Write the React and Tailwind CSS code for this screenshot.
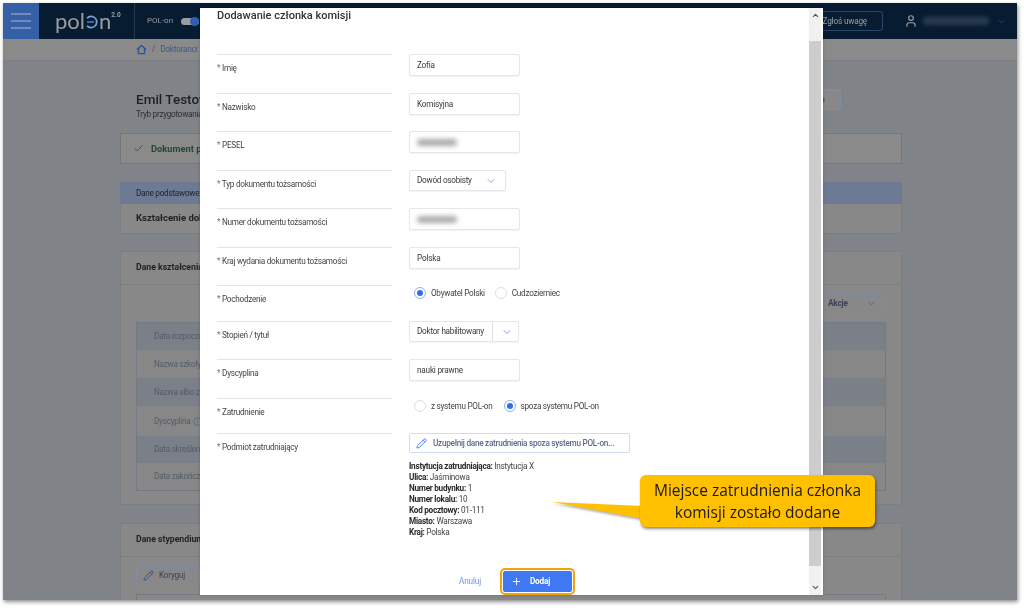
import React from "react";
import { Check, ChevronDown, ChevronUp, Pencil, Plus, User, Info } from "lucide-react";

const Label = ({ children }) => (
  <div className="w-[175px] shrink-0 border-t border-[#e4e4e4] pt-[7px] text-[8.2px] leading-[12px] tracking-[-0.27px] text-[#444]">
    <span className="text-[#777]">* </span>
    {children}
  </div>
);

const Input = ({ value, blur }) => (
  <div className="flex h-[22px] w-[111px] items-center rounded-[2px] border border-[#e6e6e6] bg-white pl-[7px] text-[8.2px] tracking-[-0.2px] text-[#3a3a3a] shadow-[0_1px_1px_rgba(0,0,0,0.05)]">
    {blur ? <span className="h-[7px] w-[40px] rounded bg-[#aaa] blur-[2.5px]"></span> : value}
  </div>
);

const Row = ({ label, h, children }) => (
  <div className={`flex gap-[17px] ${h}`}>
    <Label>{label}</Label>
    <div className="flex-1">{children}</div>
  </div>
);

const Radio = ({ on, label }) => (
  <div className="flex items-center gap-[5px]">
    <span className={`flex h-[12px] w-[12px] items-center justify-center rounded-full border bg-white ${on ? "border-[#8fb0f5]" : "border-[#ddd]"}`}>
      {on && <span className="h-[6px] w-[6px] rounded-full bg-[#2f6fed]"></span>}
    </span>
    <span className="text-[8.2px] tracking-[-0.27px] text-[#444]">{label}</span>
  </div>
);

const Detail = ({ k, v }) => (
  <div className="h-[11px] text-[8.2px] leading-[11px] tracking-[-0.27px] text-[#444]">
    <span className="font-bold text-[#2a2a2a]">{k}:</span> {v}
  </div>
);

const TableRow = ({ label, dark, h, info }) => (
  <div className={`flex items-center pl-[17px] text-[8.2px] tracking-[-0.27px] text-[#555b6b] ${h} ${dark ? "bg-[#7b7f88]" : "bg-[#878787]"}`}>
    {label}
    {info && <Info className="ml-[2px] h-[9px] w-[9px] text-[#46639f]" />}
  </div>
);

const Card = ({ title, h, children }) => (
  <div className={`border border-[#7b7e84] bg-[#888888] ${h}`}>
    <div className="flex h-[33px] items-center border-b border-[#7b7e84] pl-[15px] text-[8.7px] font-bold text-[#1e2024]">{title}</div>
    {children}
  </div>
);

const Background = () => (
  <div className="flex h-full flex-col bg-[#808388] font-['Roboto',sans-serif]">
    <header className="flex h-[36px] shrink-0 items-center bg-[#071c30]">
      <div className="flex h-full w-[36px] flex-col items-center justify-center gap-[5px] bg-[#3660a6]">
        <span className="h-[2px] w-[20px] bg-[#6f8cba]"></span>
        <span className="h-[2px] w-[20px] bg-[#6f8cba]"></span>
        <span className="h-[2px] w-[20px] bg-[#6f8cba]"></span>
      </div>
      <div className="flex h-full w-[96px] items-center border-r border-[#2a3a4d] pl-[16px]">
        <span className="font-['Lato',sans-serif] text-[22px] leading-none text-[#9a9ea3]">pol</span>
        <svg width="14" height="14" viewBox="0 0 14 14" className="mt-[2px]" fill="none">
          <path d="M2 3.2A5.6 5.6 0 1 1 2 10.8" stroke="#7f9fd2" strokeWidth="1.7" />
          <path d="M2 7H9" stroke="#3f78d0" strokeWidth="1.7" />
        </svg>
        <span className="font-['Lato',sans-serif] text-[22px] leading-none text-[#9a9ea3]">n</span>
        <span className="mb-[11px] text-[6.5px] font-bold text-[#9a9ea3]">2.0</span>
      </div>
      <span className="ml-[12px] text-[8px] text-[#9a9ea3]">POL-on</span>
      <div className="relative ml-[8px] h-[7px] w-[18px] rounded-full bg-[#9a9ea3]">
        <span className="absolute right-0 top-[-1px] h-[9px] w-[9px] rounded-full bg-[#2f5fb5]"></span>
      </div>
      <div className="ml-auto flex h-[20px] w-[80px] items-center justify-end rounded-[3px] border border-[#2b4766] pr-[15px] text-[8.2px] tracking-[-0.2px] text-[#9a9ea3]">Zgłoś uwagę</div>
      <User className="ml-[21px] h-[14px] w-[14px] text-[#9a9ea3]" />
      <span className="ml-[5px] h-[8px] w-[66px] rounded bg-[#2b3c50] blur-[2px]"></span>
      <ChevronDown className="ml-[7px] mr-[10px] h-[11px] w-[11px] text-[#1f4478]" />
    </header>
    <div className="flex h-[22px] shrink-0 items-center gap-[5px] border-b border-[#7b7e84] bg-[#8a8a8a] pl-[133px] text-[8.2px] tracking-[-0.2px] text-[#43597f]">
      <svg width="11" height="11" viewBox="0 0 24 24" fill="none" stroke="#2d5494" strokeWidth="3">
        <path d="M2 12L12 3l10 9M5.5 10v11h13V10" />
      </svg>
      <span className="text-[#555]">/</span>
      <span>Doktoranci</span>
    </div>
    <div className="ml-[117px] w-[782px]">
      <div className="flex h-[72px] items-start justify-between pl-[16px] pt-[28px]">
        <div>
          <div className="text-[13.5px] font-medium leading-[20px] text-[#1d1f23]">Emil Testowy</div>
          <div className="text-[8.2px] leading-[10px] tracking-[-0.27px] text-[#2c2e33]">Tryb przygotowania</div>
        </div>
        <div className="mr-[61px] flex h-[21px] w-[60px] items-center justify-end rounded-[3px] border border-[#7d8da5] bg-[#888] pr-[15px] text-[7.7px] font-medium text-[#3a4258]">Historia</div>
      </div>
      <div className="flex h-[31px] items-center gap-[7px] border border-[#777] bg-[#8a8a8a] pl-[12px] text-[9.3px] font-bold text-[#214a2a]">
        <Check className="h-[11px] w-[11px] text-[#26622f]" />
        Dokument przesłany
      </div>
      <div className="mt-[18px] flex h-[22px] items-center bg-[#6e7a94] pl-[16px] text-[8.2px] tracking-[-0.27px] text-[#20242c]">Dane podstawowe</div>
      <div className="flex h-[30px] items-center border border-t-0 border-[#7b7e84] bg-[#888888] pl-[15px] text-[9.5px] font-bold text-[#1e2024]">Kształcenie doktoranta</div>
      <div className="mt-[17px]">
        <Card title="Dane kształcenia" h="h-[254px]">
          <div className="flex h-[37px] items-center justify-end pr-[15px]">
            <div className="flex h-[20px] w-[80px] items-center justify-between rounded-[3px] border border-[#7d8da5] pl-[21px] pr-[8px] text-[8.2px] font-bold tracking-[-0.2px] text-[#3a4258]">
              Akcje
              <ChevronDown className="h-[11px] w-[11px] text-[#46639f]" />
            </div>
          </div>
          <div className="mx-[15px] border border-[#747a85]">
            <TableRow label="Data rozpoczęcia" dark h="h-[27px]" />
            <TableRow label="Nazwa szkoły" h="h-[28px]" />
            <TableRow label="Nazwa albo zakres" dark h="h-[28px]" />
            <TableRow label="Dyscyplina" h="h-[30px]" info />
            <TableRow label="Data skreślenia" dark h="h-[27px]" />
            <TableRow label="Data zakończenia" h="h-[27px]" />
          </div>
        </Card>
      </div>
      <div className="mt-[18px]">
        <Card title="Dane stypendium" h="h-[80px]">
          <div className="flex h-[37px] items-center pl-[15px]">
            <div className="flex h-[20px] w-[64px] items-center gap-[5px] rounded-[3px] border border-[#7d8da5] pl-[6px] text-[8.2px] tracking-[-0.2px] text-[#3a4258]">
              <Pencil className="h-[11px] w-[11px] text-[#2d5494]" />
              Koryguj
            </div>
          </div>
          <div className="mx-[15px] h-[10px] border border-b-0 border-[#747a85]"></div>
        </Card>
      </div>
    </div>
  </div>
);

const Modal = () => (
  <div className="absolute left-[197px] top-[5px] flex h-[587px] w-[623px] bg-white font-['Roboto',sans-serif] shadow-[0_0_3px_rgba(0,0,0,0.2)]">
    <div className="relative w-[609px] pl-[17px]">
      <h2 className="h-[46px] pt-px text-[11px] font-medium leading-[14px] text-[#333]">Dodawanie członka komisji</h2>
      <div className="flex flex-col">
        <Row label="Imię" h="h-[39px]"><Input value="Zofia" /></Row>
        <Row label="Nazwisko" h="h-[38px]"><Input value="Komisyjna" /></Row>
        <Row label="PESEL" h="h-[39px]"><Input blur /></Row>
        <Row label="Typ dokumentu tożsamości" h="h-[38px]">
          <div className="flex h-[21px] w-[97px] items-center justify-between rounded-[2px] border border-[#e6e6e6] pl-[7px] pr-[8px] text-[8.2px] tracking-[-0.27px] text-[#3a3a3a] shadow-[0_1px_1px_rgba(0,0,0,0.05)]">
            Dowód osobisty
            <ChevronDown className="h-[12px] w-[12px] text-[#7fa3ef]" />
          </div>
        </Row>
        <Row label="Numer dokumentu tożsamości" h="h-[39px]"><Input blur /></Row>
        <Row label="Kraj wydania dokumentu tożsamości" h="h-[38px]"><Input value="Polska" /></Row>
        <Row label="Pochodzenie" h="h-[36px]">
          <div className="flex h-[16px] items-center gap-[10px] pl-[5px]">
            <Radio on label="Obywatel Polski" />
            <Radio label="Cudzoziemiec" />
          </div>
        </Row>
        <Row label="Stopień / tytuł" h="h-[38px]">
          <div className="flex h-[21px] w-[110px] items-center rounded-[2px] border border-[#e6e6e6] text-[8.2px] tracking-[-0.27px] text-[#3a3a3a] shadow-[0_1px_1px_rgba(0,0,0,0.05)]">
            <span className="flex h-full w-[83px] items-center whitespace-nowrap border-r border-[#e0e0e0] pl-[7px]">Doktor habilitowany</span>
            <ChevronDown className="ml-[8px] h-[12px] w-[12px] text-[#7fa3ef]" />
          </div>
        </Row>
        <Row label="Dyscyplina" h="h-[39px]"><Input value="nauki prawne" /></Row>
        <Row label="Zatrudnienie" h="h-[35px]">
          <div className="flex h-[16px] items-center gap-[11px] pl-[5px] pt-[1px]">
            <Radio label="z systemu POL-on" />
            <Radio on label="spoza systemu POL-on" />
          </div>
        </Row>
        <Row label="Podmiot zatrudniający" h="h-[130px]">
          <div className="flex h-[20px] w-[221px] items-center gap-[6px] whitespace-nowrap rounded-[2px] border border-[#cfdcf8] pl-[6px] text-[8.2px] font-medium tracking-[-0.27px] text-[#5c6a8f]">
            <Pencil className="h-[11px] w-[11px] text-[#3f78f0]" />
            Uzupełnij dane zatrudnienia spoza systemu POL-on...
          </div>
          <div className="mt-[8px]">
            <Detail k="Instytucja zatrudniająca" v="Instytucja X" />
            <Detail k="Ulica" v="Jaśminowa" />
            <Detail k="Numer budynku" v="1" />
            <Detail k="Numer lokalu" v="10" />
            <Detail k="Kod pocztowy" v="01-111" />
            <Detail k="Miasto" v="Warszawa" />
            <Detail k="Kraj" v="Polska" />
          </div>
        </Row>
      </div>
      <div className="mt-[5px] flex items-center pl-[242px]">
        <span className="w-[41px] text-[8.2px] tracking-[-0.15px] text-[#6d93f0]">Anuluj</span>
        <div className="flex h-[27px] w-[75px] items-center justify-center rounded-[5px] border-[2px] border-[#f0a30a] bg-white">
          <div className="flex h-[21px] w-[69px] items-center gap-[8px] rounded-[2px] bg-[#3f78f0] pl-[8px] text-[8.2px] font-bold tracking-[-0.2px] text-white">
            <Plus className="h-[11px] w-[11px]" />
            Dodaj
          </div>
        </div>
      </div>
    </div>
    <div className="flex w-[12px] flex-col bg-[#f1f1f1]">
      <div className="flex h-[33px] items-start justify-center pt-[3px]"><ChevronUp className="h-[9px] w-[9px] text-[#555]" strokeWidth={3} /></div>
      <div className="h-[525px] bg-[#cdcdcd]"></div>
      <div className="flex flex-1 items-end justify-center pb-[3px]"><ChevronDown className="h-[9px] w-[9px] text-[#555]" strokeWidth={3} /></div>
    </div>
  </div>
);

const Callout = () => (
  <div className="absolute left-[549px] top-[472px] font-['Open_Sans',sans-serif]">
    <div className="relative">
      <svg width="92" height="60" viewBox="0 0 92 60" className="absolute left-0 top-0 drop-shadow-[1px_2px_1px_rgba(0,0,0,0.3)]" fill="none">
        <path d="M0 27L92 31V44Z" fill="#ffc000" />
      </svg>
      <div className="relative ml-[88px] flex h-[52px] w-[235px] flex-col items-center justify-center rounded-[6px] bg-[#ffc000] text-[15.5px] leading-[22px] text-[#1a1a1a] shadow-[1px_2px_3px_rgba(0,0,0,0.45)]">
        <span>Miejsce zatrudnienia członka</span>
        <span>komisji zostało dodane</span>
      </div>
    </div>
  </div>
);

export default function App() {
  return (
    <div className="h-[608px] w-[1024px] overflow-hidden bg-white pb-[8px] pl-[3px] pr-[7px] pt-[3px] blur-[0.35px]">
      <div className="relative h-full w-full overflow-hidden shadow-[1px_2px_4px_rgba(0,0,0,0.45)]">
        <Background />
        <Modal />
        <Callout />
      </div>
    </div>
  );
}
